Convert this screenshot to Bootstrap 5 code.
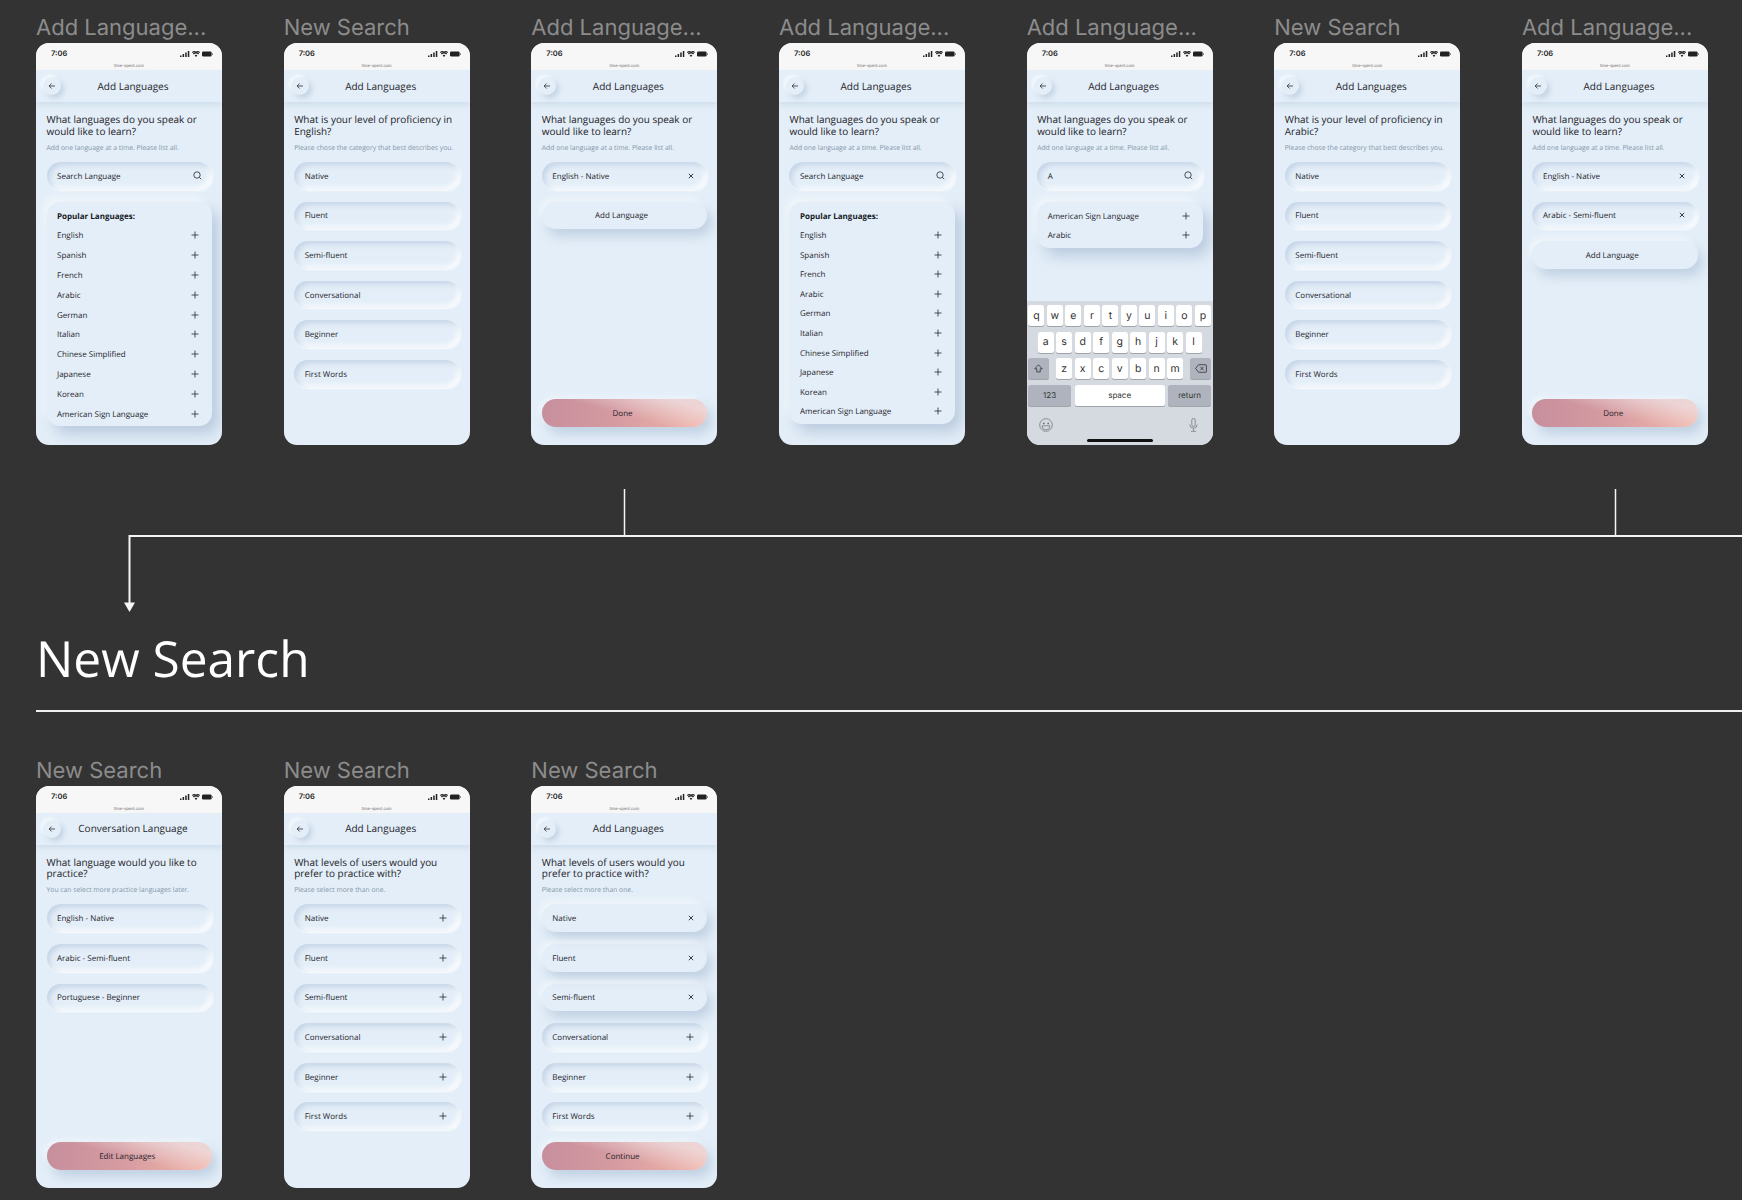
<!DOCTYPE html>
<html lang="en">
<head>
<meta charset="UTF-8">
<meta name="viewport" content="width=device-width, initial-scale=1.0">
<title>Add Languages flow</title>
<link rel="stylesheet" href="https://cdn.jsdelivr.net/npm/bootstrap@5.3.0/dist/css/bootstrap.min.css">
<style>
    body { background: #333333; font-family: "Open Sans", sans-serif; height: 1200px; overflow: hidden; text-rendering: geometricPrecision; -webkit-font-smoothing: antialiased; }
    .board { padding: 15px 0 0 36px; }
    .phone-row { gap: 61.67px; }
    .frame-label { font-family: Inter, sans-serif; font-size: 22px; line-height: 26px; padding-bottom: 2px; color: #8c8c8c; white-space: nowrap; }
    .phone { width: 186px; height: 402px; background: #e3eef8; border-radius: 13px; overflow: hidden; color: #1f242b; }
    .status-bar { height: 27px; background: #f7f7f7; padding: 6px 9px 0 15px; }
    .status-time { font-family: Inter, sans-serif; font-size: 7.5px; font-weight: 600; line-height: 10px; color: #222; }
    .status-icons { gap: 2px; padding-top: 2px; }
    .status-url { font-family: Inter, sans-serif; font-size: 4px; line-height: 6px; color: #666; margin-top: -7px; margin-bottom: 1px; }
    .nav-strip { height: 32px; padding-left: 7px; box-shadow: 0 3px 5px rgba(165, 185, 210, .3); z-index: 1; }
    .back-btn { width: 18px; height: 18px; box-shadow: 3px 3px 5px rgba(165, 185, 210, .5), -2px -2px 4px rgba(255, 255, 255, .8); }
    .nav-title { font-size: 10px; margin-left: 9.5px; width: 125px; }
    .phone-body { padding: 12px 10px 18px 10.5px; }
    .question { font-size: 9.95px; line-height: 11.7px; margin: 0; color: #1c2127; }
    .hint { font-size: 6.8px; line-height: 9px; margin: 5.5px 0 10px; color: #8696a9; }
    .pill-list { gap: 11.8px; }
    .field, .raised { height: 27.8px; font-size: 8px; padding: 0 13px 0 10.5px; }
    .field span, .raised span, .lang-row span { margin-top: 2px; }
    .field { box-shadow: inset 3px 3px 5px rgba(165, 185, 210, .45), inset -3px -3px 5px rgba(255, 255, 255, .75), 1px 1px 2px rgba(255, 255, 255, .8); }
    .field .search-icon { margin-right: -3px; }
    .raised { box-shadow: 5px 7px 11px rgba(165, 185, 210, .55), -3px -4px 7px rgba(255, 255, 255, .5); }
    .raised-center { padding-right: 16.5px; padding-top: 2px; }
    .lang-panel { margin-top: 12px; padding: 4px 10px 3px 10.5px; border-radius: 13px; box-shadow: 7px 8px 14px rgba(160, 180, 205, .6), -4px -5px 9px rgba(255, 255, 255, .55); }
    .lang-row { height: 19.8px; font-size: 8px; padding-right: 3px; }
    .lang-title { font-weight: 700; font-size: 8px; height: 19.8px; line-height: 21.8px; color: #14181d; }
    .lang-tight .lang-row, .lang-tight .lang-title { height: 19.6px; }
    .cta { height: 28px; font-size: 8px; padding-top: 2px; background: linear-gradient(15deg, rgba(236, 224, 228, 0) 47%, rgba(236, 224, 228, .75) 85%), linear-gradient(90deg, #c78f9d, #d59ba1 45%, #f4b6a9); box-shadow: 5px 7px 11px rgba(165, 185, 210, .55), -3px -3px 6px rgba(255, 255, 255, .45); }
    .keyboard { background: #d5d9e0; height: 144px; padding-top: 4px; font-family: Inter, sans-serif; }
    .key-line { height: 21.3px; margin-bottom: 5.3px; gap: 2.5px; }
    .key-edge { padding: 0 1.5px; }
    .key-group { gap: 2.5px; }
    .kb-key { width: 16px; height: 21.3px; background: #fff; border-radius: 2.5px; font-size: 10.5px; color: #333; box-shadow: 0 1px 0 #a0a4ab; }
    .kb-grey { background: #aeb3bd; }
    .kb-wide { width: 43px; font-size: 8px; }
    .kb-shift { width: 21px; }
    .kb-space { width: 90px; font-size: 8px; }
    .home-bar { width: 66px; height: 3px; background: #111; margin: 0 auto; }
    .kb-foot { padding: 7px 15px 0 12px; height: 28px; }
    .connector { display: block; }
    .section-head { font-weight: 400; font-size: 49.6px; line-height: 68px; color: #fff; margin: 0; padding-top: 12px; }
    .section-rule { height: 2px; background: #f0f0f0; margin: 17.5px 0 46px; }
</style>
</head>
<body>
<div class="board">
    <div class="d-flex phone-row" id="rowOne"></div>
    <svg class="connector" width="1706" height="167" viewBox="36 445 1706 167">
        <path d="M624.5 489V537M1615.5 489V537" stroke="#f5f5f5" stroke-width="1.5" fill="none"/>
        <path d="M1742 536H129.5V604" stroke="#f5f5f5" stroke-width="2" fill="none"/>
        <path d="M124 602.5H135L129.5 612Z" fill="#f5f5f5"/>
    </svg>
    <h1 class="section-head">New Search</h1>
    <div class="section-rule"></div>
    <div class="d-flex phone-row" id="rowTwo"></div>
</div>

<script>
const icons = {
    signal: '<svg width="10" height="6" viewBox="0 0 10 6"><path d="M0 4.5h1.5V6H0zM2.6 3h1.5v3H2.6zM5.2 1.5h1.5V6H5.2zM7.8 0h1.5v6H7.8z" fill="#222"/></svg>',
    wifi: '<svg width="8" height="6" viewBox="0 0 8 6"><path d="M4 6 2.7 4.4a2 2 0 0 1 2.6 0zM1.8 3.5.9 2.5a4.6 4.6 0 0 1 6.2 0l-.9 1a3.3 3.3 0 0 0-4.4 0zM.5 2 0 1.1a6 6 0 0 1 8 0L7.5 2A5.3 5.3 0 0 0 .5 2z" fill="#222"/></svg>',
    battery: '<svg width="11" height="6" viewBox="0 0 11 6"><rect x="0" y=".5" width="9.6" height="5" rx="1.3" fill="#222"/><rect x="10" y="2" width="1" height="2" rx=".4" fill="#777"/></svg>',
    back: '<svg width="8" height="8" viewBox="0 0 8 8"><path d="M7 4H1.2M3.6 1.5 1.1 4l2.5 2.5" stroke="#2b3036" stroke-width=".8" fill="none"/></svg>',
    search: '<svg class="search-icon" width="9" height="9" viewBox="0 0 9 9"><circle cx="4" cy="4" r="3.2" stroke="#23282f" stroke-width=".8" fill="none"/><path d="M6.3 6.3 8.2 8.2" stroke="#23282f" stroke-width=".8"/></svg>',
    plus: '<svg width="8" height="8" viewBox="0 0 8 8"><path d="M4 .5v7M.5 4h7" stroke="#23282f" stroke-width=".8"/></svg>',
    cross: '<svg width="6" height="6" viewBox="0 0 6 6"><path d="M.8.8l4.4 4.4M5.2.8.8 5.2" stroke="#23282f" stroke-width=".9"/></svg>',
    shift: '<svg width="9" height="9" viewBox="0 0 9 9"><path d="M4.5.8 8.3 4.8H6.2V8H2.8V4.8H.7z" stroke="#222" stroke-width=".7" fill="none"/></svg>',
    del: '<svg width="12" height="9" viewBox="0 0 12 9"><path d="M3.6.7h7.2a.6.6 0 0 1 .6.6v6.4a.6.6 0 0 1-.6.6H3.6L.6 4.5z" stroke="#222" stroke-width=".7" fill="none"/><path d="M5.4 2.8 8.6 6.2M8.6 2.8 5.4 6.2" stroke="#222" stroke-width=".7"/></svg>',
    emoji: '<svg width="14" height="14" viewBox="0 0 14 14"><circle cx="7" cy="7" r="6.3" stroke="#6b6f76" stroke-width=".7" fill="none"/><circle cx="4.8" cy="5.4" r=".9" fill="#6b6f76"/><circle cx="9.2" cy="5.4" r=".9" fill="#6b6f76"/><path d="M3 7.8h8a4 4 0 0 1-8 0z" stroke="#6b6f76" stroke-width=".7" fill="none"/></svg>',
    mic: '<svg width="9" height="14" viewBox="0 0 9 14"><rect x="2.8" y=".5" width="3.4" height="8" rx="1.7" stroke="#6b6f76" stroke-width=".7" fill="none"/><path d="M.8 6.5a3.7 3.7 0 0 0 7.4 0M4.5 10.3v2.7M2 13.3h5" stroke="#6b6f76" stroke-width=".7" fill="none"/></svg>'
};

const levels = ["Native", "Fluent", "Semi-fluent", "Conversational", "Beginner", "First Words"];
const popular = ["English", "Spanish", "French", "Arabic", "German", "Italian", "Chinese Simplified", "Japanese", "Korean", "American Sign Language"];
const askLearn = "What languages do you speak or would like to learn?";
const askHint = "Add one language at a time. Please list all.";

function field(text, icon) {
    return `<div class="field rounded-pill d-flex align-items-center justify-content-between"><span>${text}</span>${icon ? icons[icon] : ""}</div>`;
}
function raised(text, icon) {
    if (!icon) return `<div class="raised raised-center rounded-pill d-flex align-items-center justify-content-center">${text}</div>`;
    return `<div class="raised rounded-pill d-flex align-items-center justify-content-between"><span>${text}</span>${icons[icon]}</div>`;
}
function panel(title, rows, extra) {
    const head = title ? `<div class="lang-title">${title}</div>` : "";
    const items = rows.map(r => `<div class="lang-row d-flex align-items-center justify-content-between"><span>${r}</span>${icons.plus}</div>`).join("");
    return `<div class="lang-panel ${extra || ""}">${head}${items}</div>`;
}
function pills(html) { return `<div class="pill-list d-flex flex-column">${html}</div>`; }
function cta(text) { return `<div class="cta rounded-pill d-flex align-items-center justify-content-center mt-auto pe-1">${text}</div>`; }

function keyboard() {
    const keys = s => s.split("").map(k => `<div class="kb-key d-flex align-items-center justify-content-center">${k}</div>`).join("");
    return `<div class="keyboard">
        <div class="key-line d-flex justify-content-center">${keys("qwertyuiop")}</div>
        <div class="key-line d-flex justify-content-center">${keys("asdfghjkl")}</div>
        <div class="key-line key-edge d-flex justify-content-between">
            <div class="kb-key kb-shift kb-grey d-flex align-items-center justify-content-center">${icons.shift}</div>
            <div class="d-flex key-group">${keys("zxcvbnm")}</div>
            <div class="kb-key kb-shift kb-grey d-flex align-items-center justify-content-center">${icons.del}</div>
        </div>
        <div class="key-line key-edge d-flex justify-content-between">
            <div class="kb-key kb-wide kb-grey d-flex align-items-center justify-content-center">123</div>
            <div class="kb-key kb-space d-flex align-items-center justify-content-center">space</div>
            <div class="kb-key kb-wide kb-grey d-flex align-items-center justify-content-center">return</div>
        </div>
        <div class="kb-foot d-flex justify-content-between align-items-start">${icons.emoji}${icons.mic}</div>
        <div class="home-bar rounded-pill"></div>
    </div>`;
}

function phone(p) {
    return `<div>
        <div class="frame-label">${p.label}</div>
        <div class="phone d-flex flex-column">
            <div class="status-bar d-flex justify-content-between">
                <div class="status-time">7:06</div>
                <div class="status-icons d-flex align-items-start">${icons.signal}${icons.wifi}${icons.battery}</div>
            </div>
            <div class="status-url text-center">time-spent.com</div>
            <div class="nav-strip d-flex align-items-center position-relative">
                <div class="back-btn rounded-circle d-flex align-items-center justify-content-center">${icons.back}</div>
                <div class="nav-title text-center">${p.title || "Add Languages"}</div>
            </div>
            <div class="phone-body d-flex flex-column flex-grow-1">
                <p class="question">${p.question}</p>
                <p class="hint">${p.hint}</p>
                ${p.body}
                ${p.button ? cta(p.button) : ""}
            </div>
            ${p.keyboard ? keyboard() : ""}
        </div>
    </div>`;
}

const rowOne = [
    { label: "Add Language...", question: askLearn, hint: askHint, body: field("Search Language", "search") + panel("Popular Languages:", popular) },
    { label: "New Search", question: "What is your level of proficiency in English?", hint: "Please chose the category that best describes you.", body: pills(levels.map(l => field(l)).join("")) },
    { label: "Add Language...", question: askLearn, hint: askHint, body: pills(field("English - Native", "cross") + raised("Add Language")), button: "Done" },
    { label: "Add Language...", question: askLearn, hint: askHint, body: field("Search Language", "search") + panel("Popular Languages:", popular, "lang-tight") },
    { label: "Add Language...", question: askLearn, hint: askHint, body: field("A", "search") + panel("", ["American Sign Language", "Arabic"]), keyboard: true },
    { label: "New Search", question: "What is your level of proficiency in Arabic?", hint: "Please chose the category that best describes you.", body: pills(levels.map(l => field(l)).join("")) },
    { label: "Add Language...", question: askLearn, hint: askHint, body: pills(field("English - Native", "cross") + field("Arabic - Semi-fluent", "cross") + raised("Add Language")), button: "Done" }
];
const askLevels = "What levels of users would you prefer to practice with?";
const rowTwo = [
    { label: "New Search", title: "Conversation Language", question: "What language would you like to practice?", hint: "You can select more practice languages later.", body: pills(["English - Native", "Arabic - Semi-fluent", "Portuguese - Beginner"].map(l => field(l)).join("")), button: "Edit Languages" },
    { label: "New Search", question: askLevels, hint: "Please select more than one.", body: pills(levels.map(l => field(l, "plus")).join("")) },
    { label: "New Search", question: askLevels, hint: "Please select more than one.", body: pills(levels.map((l, i) => i < 3 ? raised(l, "cross") : field(l, "plus")).join("")), button: "Continue" }
];

document.getElementById("rowOne").innerHTML = rowOne.map(phone).join("");
document.getElementById("rowTwo").innerHTML = rowTwo.map(phone).join("");
</script>
<script src="https://cdn.jsdelivr.net/npm/bootstrap@5.3.0/dist/js/bootstrap.bundle.min.js"></script>
</body>
</html>
